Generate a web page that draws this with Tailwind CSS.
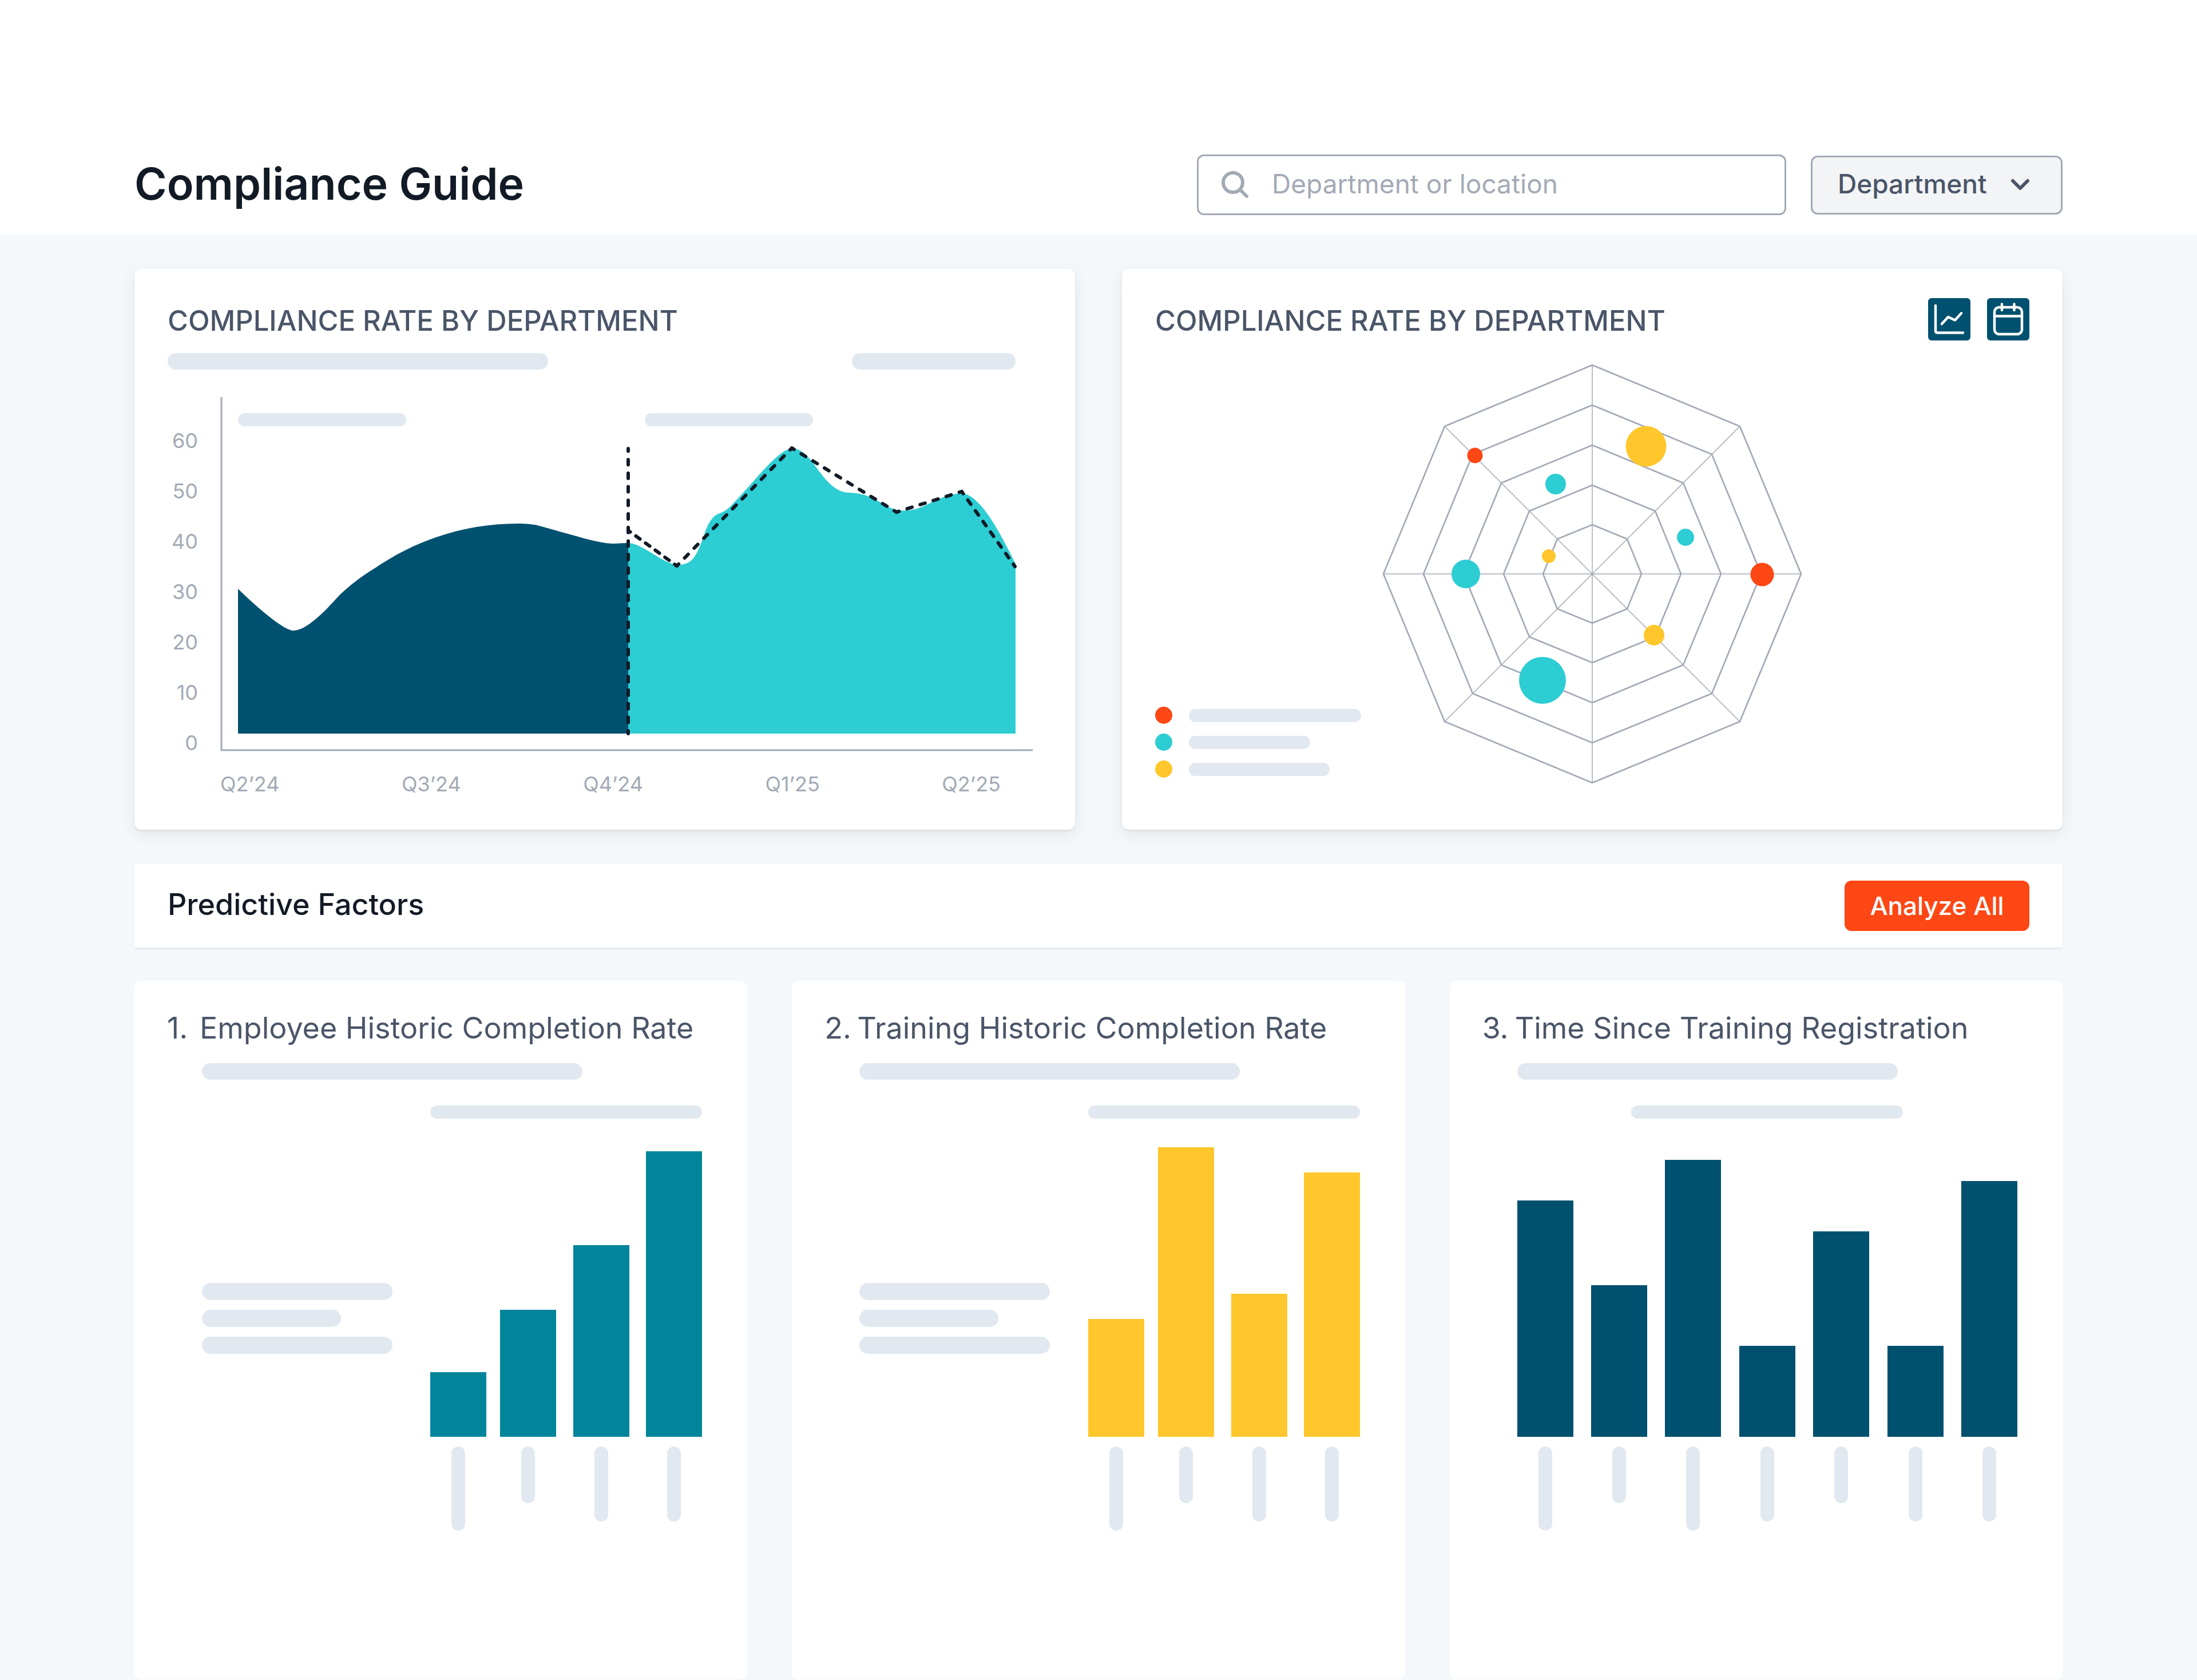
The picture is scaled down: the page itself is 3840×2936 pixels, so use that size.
<!DOCTYPE html>
<html lang="en">
<head>
<meta charset="utf-8">
<meta name="viewport" content="width=device-width, initial-scale=1">
<title>Compliance Guide</title>
<script src="https://cdn.jsdelivr.net/npm/@tailwindcss/browser@4"></script>
</head>
<body class="min-h-screen bg-[#f4f8fb] font-[Inter,'Liberation_Sans',sans-serif] text-[#4a5568]">
<header class="flex items-center justify-between bg-white px-[235px] pt-[270px] pb-[35px]">
  <h1 class="pb-1 text-[77px] leading-[100px] font-semibold text-[#121a26]">Compliance Guide</h1>
  <form class="flex items-center gap-[43px]">
    <div class="flex h-[106px] w-[1030px] items-center gap-10 rounded-xl border-[3px] border-[#a3aab5] bg-white pr-8 pl-10">
      <svg class="size-12 shrink-0" viewBox="0 0 48 48" fill="none" stroke="#a3aab5" stroke-width="6" stroke-linecap="round" aria-hidden="true"><circle cx="20" cy="20" r="17"/><path d="M32.500 32.500 44 44"/></svg>
      <input type="search" aria-label="Search" placeholder="Department or location" class="min-w-0 flex-1 bg-transparent pb-1 text-[46px] leading-[60px] outline-none placeholder:text-[#a3aab5]">
    </div>
    <div class="relative">
      <select aria-label="Filter by" class="h-[103px] w-[440px] appearance-none rounded-xl border-[3px] border-[#a3aab5] bg-[#f3f4f6] pb-1 pl-[44px] text-[46px] font-medium">
        <option>Department</option>
      </select>
      <svg class="pointer-events-none absolute top-[31px] right-[54px] size-10" viewBox="0 0 40 40" fill="none" stroke="#4a5568" stroke-width="6" stroke-linecap="round" stroke-linejoin="round" aria-hidden="true"><path d="M7 13 20 26 33 13"/></svg>
    </div>
  </form>
</header>

<main class="px-[235px] pt-[59px]">
  <div class="grid grid-cols-2 gap-[82px]">
    <section class="rounded-xl bg-white px-[58px] pt-[51px] pb-14 shadow-[0_2px_3px_rgba(0,0,0,0.08),0_8px_28px_rgba(0,0,0,0.08)]">
      <h2 class="text-[49px] leading-[80px] font-medium">COMPLIANCE RATE BY DEPARTMENT</h2>
      <div class="mt-4 flex justify-between pr-[46px]">
        <div class="h-[29px] w-[665px] rounded-full bg-[#e1e8f0]"></div>
        <div class="h-[29px] w-[286px] rounded-full bg-[#e1e8f0]"></div>
      </div>
      <div class="mt-12 grid grid-cols-[53px_1fr] gap-x-[39px] gap-y-8 pr-4 text-[36px] text-[#a3aab5]">
        <div class="flex flex-col justify-between pt-[60px] text-right leading-8">
          <span>60</span><span>50</span><span>40</span><span>30</span><span>20</span><span>10</span><span>0</span>
        </div>
        <svg class="h-auto w-full" viewBox="385 694 1420 620" fill="none" role="img" aria-label="Compliance rate by quarter">
          <path d="M387 694V1311H1805" stroke="#a3aab5" stroke-width="3"/>
          <rect x="416" y="722" width="294" height="23" rx="11.500" fill="#e1e8f0"/>
          <rect x="1127" y="722" width="294" height="23" rx="11.500" fill="#e1e8f0"/>
          <path fill="#00506f" d="M416 1029C450 1062 496 1102 513 1102C535 1102 568 1068 586 1048C604 1028 632 1007 655 993C730 942 815 915 905 915C918 915 930 916 939 918C985 930 1045 950 1071 950C1080 950 1087 949 1098 949V1282H416Z"/>
          <path fill="#2ccdd3" d="M1098 949C1125 950 1155 984 1184 987C1212 988 1218 968 1229 940C1238 910 1248 900 1258 897C1268 893 1270 892 1288 873C1320 840 1358 788 1384 783C1412 785 1425 820 1448 843C1460 855 1472 861 1485 861C1530 863 1540 885 1567 891C1615 899 1630 865 1682 862C1715 866 1750 935 1775 985V1282H1098Z"/>
          <g stroke="#121a26" stroke-width="6" stroke-linecap="round" stroke-dashoffset="4.500">
            <path d="M1098 784V1282" stroke-dasharray="9 14.700"/>
            <path d="M1098 927 1183 989" stroke-dasharray="9 12"/>
            <path d="M1183 989 1384 783" stroke-dasharray="9 15"/>
            <path d="M1384 783 1567 895" stroke-dasharray="9 14.800"/>
            <path d="M1567 895 1681 859" stroke-dasharray="9 14.900"/>
            <path d="M1681 859 1774 990" stroke-dasharray="9 13.900"/>
          </g>
        </svg>
        <div class="col-start-2 flex justify-between pr-[56px] leading-[48px]">
          <span>Q2’24</span><span>Q3’24</span><span>Q4’24</span><span>Q1’25</span><span>Q2’25</span>
        </div>
      </div>
    </section>

    <section class="rounded-xl bg-white px-[58px] pt-[51px] pb-14 shadow-[0_2px_3px_rgba(0,0,0,0.08),0_8px_28px_rgba(0,0,0,0.08)]">
      <div class="flex items-start justify-between">
        <h2 class="text-[49px] leading-[80px] font-medium">COMPLIANCE RATE BY DEPARTMENT</h2>
        <div class="flex gap-[29px]">
          <button type="button" aria-label="Chart view" class="size-[74px] rounded-md bg-[#00506f]">
            <svg viewBox="0 0 74 74" fill="none" stroke="#fff" stroke-width="4.500" stroke-linecap="round" stroke-linejoin="round"><path d="M13 13V57Q13 60.500 16.500 60.500H61M24 45 35 33 47 38.500 58 26.500"/></svg>
          </button>
          <button type="button" aria-label="Calendar view" class="size-[74px] rounded-md bg-[#00506f]">
            <svg viewBox="0 0 74 74" fill="none" stroke="#fff" stroke-width="4.500" stroke-linecap="round"><rect x="13" y="16" width="48" height="47" rx="8"/><path d="M13 31.500H61M26 10.500V21M47.500 10.500V21"/></svg>
          </button>
        </div>
      </div>
      <div class="mt-8 grid">
        <svg class="col-start-1 row-start-1 size-[740px] justify-self-center" viewBox="-370 -370 740 740" fill="none" role="img" aria-label="Compliance rate radar">
          <g stroke="#a3aab5" stroke-width="1.500">
            <path d="M0-365V365M-365 0H365M-258-258 258 258M258-258-258 258"/>
          </g>
          <g stroke="#a3aab5" stroke-width="2.700" stroke-linejoin="round">
            <path d="M0-365 258-258 365 0 258 258 0 365-258 258-365 0-258-258Z"/>
            <path d="M0-295 209-209 295 0 209 209 0 295-209 209-295 0-209-209Z"/>
            <path d="M0-225 159-159 225 0 159 159 0 225-159 159-225 0-159-159Z"/>
            <path d="M0-155 110-110 155 0 110 110 0 155-110 110-155 0-110-110Z"/>
            <path d="M0-86 61-61 86 0 61 61 0 86-61 61-86 0-61-61Z"/>
          </g>
          <g fill="#fd4714"><circle cx="-205" cy="-207" r="13.500"/><circle cx="297" cy="1" r="20.500"/></g>
          <g fill="#2ccdd3"><circle cx="-64" cy="-157" r="18"/><circle cx="163" cy="-64" r="15"/><circle cx="-221" cy="0" r="25"/><circle cx="-87" cy="186" r="41"/></g>
          <g fill="#ffc72c"><circle cx="94" cy="-223" r="35.500"/><circle cx="108" cy="107" r="18"/><circle cx="-76" cy="-31" r="12"/></g>
        </svg>
        <ul class="col-start-1 row-start-1 mb-[14px] flex flex-col gap-[17px] self-end">
          <li class="flex items-center gap-[29px]"><i class="size-[30px] rounded-full bg-[#fd4714]"></i><span class="h-[23px] w-[301px] rounded-full bg-[#e1e8f0]"></span></li>
          <li class="flex items-center gap-[29px]"><i class="size-[30px] rounded-full bg-[#2ccdd3]"></i><span class="h-[23px] w-[212px] rounded-full bg-[#e1e8f0]"></span></li>
          <li class="flex items-center gap-[29px]"><i class="size-[30px] rounded-full bg-[#ffc72c]"></i><span class="h-[23px] w-[246px] rounded-full bg-[#e1e8f0]"></span></li>
        </ul>
      </div>
    </section>
  </div>

  <section class="mt-[59px] flex h-[147px] items-center justify-between bg-white px-[58px] shadow-[0_2px_3px_rgba(0,0,0,0.08)]">
    <h2 class="pb-1 text-[52px] leading-[60px] font-medium text-[#121a26]">Predictive Factors</h2>
    <button type="button" class="h-[88px] w-[323px] rounded-xl bg-[#fd4714] text-[44px] font-medium text-white">Analyze All</button>
  </section>

  <div class="mt-[58px] grid grid-cols-3 gap-[78px]">
    <section class="rounded-xl bg-white pt-[53px] pr-[79px] pb-[260px] pl-[118px]">
      <h3 class="-ml-[61px] flex text-[52px] leading-[60px] whitespace-nowrap"><span class="w-[57px]">1.</span>Employee Historic Completion Rate</h3>
      <div class="mt-[31px] h-[29px] w-[665px] rounded-full bg-[#e1e8f0]"></div>
      <div class="mt-[45px] ml-auto h-[23px] w-[475px] rounded-full bg-[#e1e8f0]"></div>
      <div class="flex justify-between">
        <div class="flex h-[556px] flex-col justify-end gap-[17px] pb-[145px]">
          <div class="h-[30px] w-[333px] rounded-full bg-[#e1e8f0]"></div>
          <div class="h-[30px] w-[243px] rounded-full bg-[#e1e8f0]"></div>
          <div class="h-[30px] w-[333px] rounded-full bg-[#e1e8f0]"></div>
        </div>
        <div class="grid grid-cols-[122px_128px_127px_98px] grid-rows-[556px_147px] gap-y-[17px]">
          <div class="w-[98px] self-end bg-[#00859b]" style="height:113px"></div>
          <div class="w-[98px] self-end bg-[#00859b]" style="height:222px"></div>
          <div class="w-[98px] self-end bg-[#00859b]" style="height:335px"></div>
          <div class="w-[98px] self-end bg-[#00859b]" style="height:499px"></div>
          <div class="ml-[37px] w-6 rounded-full bg-[#e1e8f0]" style="height:147px"></div>
          <div class="ml-[37px] w-6 rounded-full bg-[#e1e8f0]" style="height:99px"></div>
          <div class="ml-[37px] w-6 rounded-full bg-[#e1e8f0]" style="height:131px"></div>
          <div class="ml-[37px] w-6 rounded-full bg-[#e1e8f0]" style="height:131px"></div>
        </div>
      </div>
    </section>

    <section class="rounded-xl bg-white pt-[53px] pr-[79px] pb-[260px] pl-[118px]">
      <h3 class="-ml-[61px] flex text-[52px] leading-[60px] whitespace-nowrap"><span class="w-[57px]">2.</span>Training Historic Completion Rate</h3>
      <div class="mt-[31px] h-[29px] w-[665px] rounded-full bg-[#e1e8f0]"></div>
      <div class="mt-[45px] ml-auto h-[23px] w-[475px] rounded-full bg-[#e1e8f0]"></div>
      <div class="flex justify-between">
        <div class="flex h-[556px] flex-col justify-end gap-[17px] pb-[145px]">
          <div class="h-[30px] w-[333px] rounded-full bg-[#e1e8f0]"></div>
          <div class="h-[30px] w-[243px] rounded-full bg-[#e1e8f0]"></div>
          <div class="h-[30px] w-[333px] rounded-full bg-[#e1e8f0]"></div>
        </div>
        <div class="grid grid-cols-[122px_128px_127px_98px] grid-rows-[556px_147px] gap-y-[17px]">
          <div class="w-[98px] self-end bg-[#ffc72c]" style="height:206px"></div>
          <div class="w-[98px] self-end bg-[#ffc72c]" style="height:506px"></div>
          <div class="w-[98px] self-end bg-[#ffc72c]" style="height:250px"></div>
          <div class="w-[98px] self-end bg-[#ffc72c]" style="height:462px"></div>
          <div class="ml-[37px] w-6 rounded-full bg-[#e1e8f0]" style="height:147px"></div>
          <div class="ml-[37px] w-6 rounded-full bg-[#e1e8f0]" style="height:99px"></div>
          <div class="ml-[37px] w-6 rounded-full bg-[#e1e8f0]" style="height:131px"></div>
          <div class="ml-[37px] w-6 rounded-full bg-[#e1e8f0]" style="height:131px"></div>
        </div>
      </div>
    </section>

    <section class="rounded-xl bg-white pt-[53px] pr-[79px] pb-[260px] pl-[118px]">
      <h3 class="-ml-[61px] flex text-[52px] leading-[60px] whitespace-nowrap"><span class="w-[57px]">3.</span>Time Since Training Registration</h3>
      <div class="mt-[31px] h-[29px] w-[665px] rounded-full bg-[#e1e8f0]"></div>
      <div class="mx-auto mt-[45px] h-[23px] w-[475px] rounded-full bg-[#e1e8f0]"></div>
      <div class="grid grid-cols-[repeat(7,98px)] grid-rows-[556px_147px] justify-between gap-y-[17px]">
        <div class="self-end bg-[#00506f]" style="height:413px"></div>
        <div class="self-end bg-[#00506f]" style="height:265px"></div>
        <div class="self-end bg-[#00506f]" style="height:484px"></div>
        <div class="self-end bg-[#00506f]" style="height:159px"></div>
        <div class="self-end bg-[#00506f]" style="height:359px"></div>
        <div class="self-end bg-[#00506f]" style="height:159px"></div>
        <div class="self-end bg-[#00506f]" style="height:447px"></div>
        <div class="ml-[37px] w-6 rounded-full bg-[#e1e8f0]" style="height:147px"></div>
        <div class="ml-[37px] w-6 rounded-full bg-[#e1e8f0]" style="height:99px"></div>
        <div class="ml-[37px] w-6 rounded-full bg-[#e1e8f0]" style="height:147px"></div>
        <div class="ml-[37px] w-6 rounded-full bg-[#e1e8f0]" style="height:131px"></div>
        <div class="ml-[37px] w-6 rounded-full bg-[#e1e8f0]" style="height:99px"></div>
        <div class="ml-[37px] w-6 rounded-full bg-[#e1e8f0]" style="height:131px"></div>
        <div class="ml-[37px] w-6 rounded-full bg-[#e1e8f0]" style="height:131px"></div>
      </div>
    </section>
  </div>
</main>
</body>
</html>
